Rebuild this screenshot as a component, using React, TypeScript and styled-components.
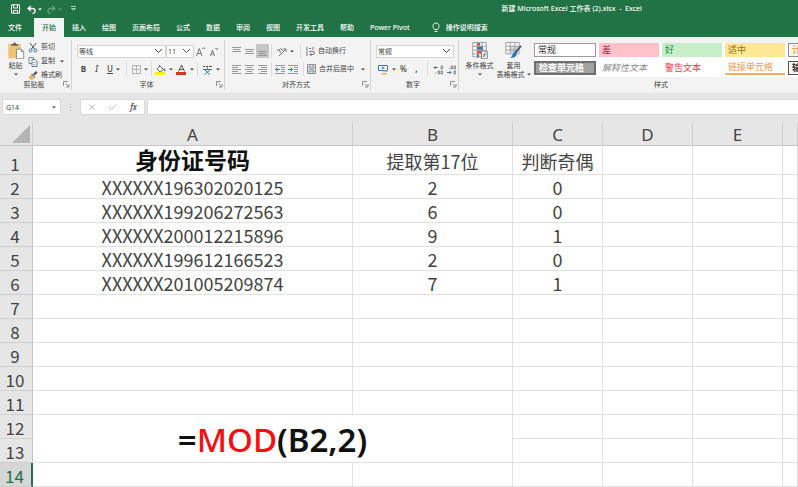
import React from "react";
import styled, { createGlobalStyle, css } from "styled-components";

const GREEN = "#217346";
const INK = "#444444";

const GlobalStyle = createGlobalStyle`
  * { box-sizing: border-box; }
  body { margin: 0; background: #ffffff; color: ${INK}; font-family: "Noto Sans", "Noto Sans CJK SC", sans-serif; font-size: 7px; }
  button, input, select { font: inherit; color: inherit; margin: 0; padding: 0; border: 0; background: none; border-radius: 0; }
  input:focus, select:focus { outline: 0; }
`;

const TopBar = styled.header`
  background: ${GREEN};
  color: #ffffff;
`;

const TitleRow = styled.div`
  display: flex;
  align-items: center;
  justify-content: space-between;
  height: 18px;
  padding: 0 156px 0 8px;
`;

const QuickAccess = styled.div`
  display: flex;
  align-items: center;
  gap: 5px;
`;

const QuickButton = styled.button<{ $dim?: boolean }>`
  display: flex;
  align-items: center;
  gap: 2px;
  height: 14px;
  opacity: ${(p) => (p.$dim ? 0.3 : 1)};
`;

const DocTitle = styled.h1`
  margin: 0;
  font-size: 7px;
  line-height: 16px;
  font-weight: 500;
  white-space: pre;
`;

const TabRow = styled.nav`
  display: flex;
  height: 19px;
  align-items: stretch;
`;

const Tab = styled.button<{ $active?: boolean; $file?: boolean }>`
  padding: 0 8px;
  margin-right: ${(p) => (p.$file ? 4 : 0)}px;
  font-size: 7px;
  line-height: 17px;
  font-weight: 500;
  white-space: nowrap;
  ${(p) => p.$active && css`background: #f3f3f3; color: ${GREEN};`}
`;

const TellMe = styled(Tab)`
  display: flex;
  align-items: center;
  gap: 6px;
  margin-left: 6px;
`;

const RibbonBar = styled.section`
  display: flex;
  height: 56px;
  background: #f3f3f3;
  overflow: hidden;
`;

const Group = styled.div<{ $width?: number }>`
  display: flex;
  flex-direction: column;
  flex: ${(p) => (p.$width ? `0 0 ${p.$width}px` : "1 0 400px")};
  margin: 3px 0;
  padding-left: 5px;
  border-right: 1px solid #d2d2d2;
  &:last-child { border-right: 0; }
`;

const GroupBody = styled.div`
  flex: 1;
  display: flex;
  min-height: 0;
`;

const GroupFooter = styled.div`
  display: flex;
  align-items: center;
  height: 11px;
  line-height: 11px;
  padding-right: 1px;
  span { flex: 1; text-align: center; }
`;

const Launcher = styled.button`
  display: flex;
`;

const Rows = styled.div`
  display: flex;
  flex-direction: column;
  flex: 1;
  padding-top: 2px;
`;

const ToolRow = styled.div`
  display: flex;
  align-items: center;
  height: 18px;
`;

const Tool = styled.button<{ $wide?: boolean; $on?: boolean }>`
  display: flex;
  align-items: center;
  justify-content: center;
  gap: 3px;
  width: ${(p) => (p.$wide ? 21 : 13)}px;
  height: 14px;
  flex: none;
  background: ${(p) => (p.$on ? "#c6c6c6" : "none")};
`;

const TextTool = styled.button`
  display: flex;
  align-items: center;
  gap: 3px;
  height: 14px;
  line-height: 14px;
  white-space: nowrap;
`;

const Divider = styled.span<{ $space?: number }>`
  width: 1px;
  height: 14px;
  margin: 0 ${(p) => p.$space ?? 2}px;
  background: #dcdcdc;
`;

const SelectBox = styled.span<{ $width: number }>`
  display: flex;
  align-items: center;
  width: ${(p) => p.$width}px;
  height: 13px;
  padding-right: 2px;
  background: #ffffff;
  border: 1px solid #d4d4d4;
  select {
    appearance: none;
    flex: 1;
    min-width: 0;
    height: 11px;
    line-height: 11px;
    padding-left: 1px;
  }
  svg { pointer-events: none; }
`;

const BigTool = styled.button<{ $width: number }>`
  display: flex;
  flex-direction: column;
  align-items: center;
  width: ${(p) => p.$width}px;
  padding-top: 1px;
  line-height: 9px;
  white-space: nowrap;
  > svg:first-child { margin-bottom: 2px; }
`;

const CaretLine = styled.span`
  display: flex;
  align-items: center;
  justify-content: center;
  gap: 2px;
  height: 9px;
`;

const Stack = styled.div`
  display: flex;
  flex-direction: column;
  padding-left: 2px;
`;

const Gallery = styled.div`
  flex: 1;
  min-width: 0;
  align-self: flex-start;
  display: grid;
  grid-template-columns: 62px repeat(4, 60px);
  gap: 4px 3px;
  margin: 3px 0 0 2px;
  padding-bottom: 2px;
  background: #ffffff;
  overflow: hidden;
`;

type SwatchKind = "normal" | "bad" | "good" | "neutral" | "calc" | "check" | "explain" | "warn" | "link" | "output";

const swatches: Record<SwatchKind, ReturnType<typeof css>> = {
  normal: css`border: 1px solid #9b9b9b; color: #333333;`,
  bad: css`background: #ffc2cb; color: #b3203a;`,
  good: css`background: #c5eec9; color: #1f8a3d;`,
  neutral: css`background: #ffe894; color: #a06d12;`,
  calc: css`background: #f5f5f5; border: 1px solid #8f8f8f; color: #fa7d00;`,
  check: css`background: #a2a2a2; border: 2px solid #6f6f6f; color: #ffffff; font-weight: 700;`,
  explain: css`color: #8a8a8a; font-style: italic;`,
  warn: css`color: #f33b48;`,
  link: css`color: #f79646; border-bottom: 2px solid #ffab5c;`,
  output: css`background: #f5f5f5; border: 1px solid #555555; color: #333333; font-weight: 700;`,
};

const Swatch = styled.button<{ $kind: SwatchKind }>`
  display: flex;
  align-items: center;
  height: 14px;
  padding: 0 3px;
  font-size: 9px;
  line-height: 10px;
  white-space: nowrap;
  overflow: hidden;
  ${(p) => swatches[p.$kind]}
`;

const FormulaBar = styled.section`
  display: flex;
  align-items: stretch;
  height: 29px;
  padding: 6px 0 7px 2px;
  background: #e6e6e6;
`;

const NameBox = styled.label`
  display: flex;
  align-items: center;
  width: 59px;
  padding: 0 4px 0 3px;
  background: #ffffff;
  border: 1px solid #dadada;
  input { flex: 1; min-width: 0; height: 14px; font-size: 7px; }
`;

const Grip = styled.span`
  width: 19px;
  display: flex;
  align-items: center;
  justify-content: center;
`;

const FormulaButtons = styled.div`
  display: flex;
  align-items: center;
  justify-content: space-around;
  width: 65px;
  margin-right: 2px;
  background: #ffffff;
  border: 1px solid #dadada;
`;

const FormulaInput = styled.input`
  flex: 1;
  min-width: 0;
  && { background: #ffffff; border: 1px solid #dadada; border-right: 0; padding: 0 4px; }
`;

const Sheet = styled.table`
  width: 100%;
  table-layout: fixed;
  border-collapse: separate;
  border-spacing: 0;
  font-family: "Noto Sans CJK SC", "Noto Sans", sans-serif;
  font-size: 18px;
  line-height: 21px;
  color: #444444;
`;

const ColHead = styled.th`
  height: 24px;
  padding: 2px 0 0;
  background: #e6e6e6;
  border-right: 1px solid #cfcfcf;
  border-bottom: 1px solid #c6c6c6;
  font-family: "Noto Sans", sans-serif;
  font-size: 17px;
  line-height: 21px;
  font-weight: 400;
`;

const Corner = styled(ColHead)`
  padding: 0 2px 2px 0;
  text-align: right;
  vertical-align: bottom;
  line-height: 0;
`;

const RowHead = styled.th<{ $active?: boolean; $tall?: boolean }>`
  height: ${(p) => (p.$tall ? 29 : 24)}px;
  padding: 0 2px 0 0;
  vertical-align: bottom;
  background: ${(p) => (p.$active ? "#d6d6d6" : "#e6e6e6")};
  color: ${(p) => (p.$active ? GREEN : "#444444")};
  border-right: ${(p) => (p.$active ? `2px solid ${GREEN}` : "1px solid #c6c6c6")};
  border-bottom: 1px solid #cfcfcf;
  font-size: 17px;
  line-height: 20px;
  font-weight: 400;
`;

const Cell = styled.td<{ $title?: boolean }>`
  padding: 2px 0 0;
  text-align: center;
  border-right: 1px solid #e2e2e2;
  border-bottom: 1px solid #e2e2e2;
  white-space: nowrap;
  ${(p) => p.$title && css`
    padding: 3px 0 0;
    font-family: "Liberation Sans", "Noto Sans CJK SC", sans-serif;
    font-size: 23px;
    line-height: 25px;
    font-weight: 700;
    color: #111111;
  `}
`;

const FormulaCell = styled(Cell)`
  font-family: "Noto Sans", sans-serif;
  font-size: 33px;
  line-height: 45px;
  font-weight: 600;
  color: #111111;
`;

const FunctionName = styled.span`
  font-weight: 500;
  color: #fb0d0d;
`;

const Caret = () => (
  <svg width="4" height="3" viewBox="0 0 4 3" aria-hidden><path d="M0 .5h4L2 2.5z" fill="currentColor" /></svg>
);

const Chevron = () => (
  <svg width="9" height="6" viewBox="0 0 9 6" aria-hidden><path d="M1 1l3.5 3.5L8 1" fill="none" stroke="#555" strokeWidth="1" /></svg>
);

type IconProps = { w?: number; h?: number; children: React.ReactNode };
const Icon = ({ w = 11, h = 11, children }: IconProps) => (
  <svg width={w} height={h} viewBox={`0 0 ${w} ${h}`} fill="none" stroke="#777" strokeWidth="1" aria-hidden>{children}</svg>
);

const Lines = ({ rows }: { rows: [number, number, number][] }) => (
  <Icon>{rows.map(([x, y, len]) => <path key={y} d={`M${x} ${y}.5h${len}`} stroke="#999" />)}</Icon>
);

const LaunchIcon = () => (
  <Icon w={7} h={7}><path d="M.5 5V.5H5M2.5 2.5l3 3M6 3v3H3" stroke="#777" strokeWidth=".8" /></Icon>
);

const Footer = ({ label, launcher = true }: { label: string; launcher?: boolean }) => (
  <GroupFooter>
    <span>{label}</span>
    {launcher && <Launcher aria-label={`${label}设置`}><LaunchIcon /></Launcher>}
  </GroupFooter>
);

const Letter = styled.span<{ $bold?: boolean; $italic?: boolean; $under?: boolean }>`
  font-size: 8px;
  line-height: 12px;
  font-weight: ${(p) => (p.$bold ? 700 : 500)};
  font-style: ${(p) => (p.$italic ? "italic" : "normal")};
  text-decoration: ${(p) => (p.$under ? "underline" : "none")};
`;

const ClipboardGroup = () => (
  <Group $width={72}>
    <GroupBody>
      <BigTool $width={21}>
        <Icon w={18} h={19}>
          <path d="M1 3h13v15H1z" fill="#efc477" stroke="none" />
          <path d="M4 5V3h2c0-2 3-2 3 0h2v2z" fill="#666" stroke="none" />
          <path d="M9.500 8.500h5l2.500 2.500v7.500h-7.500z" fill="#fff" stroke="#8a8a8a" />
          <path d="M14.500 8.500V11H17" stroke="#8a8a8a" />
        </Icon>
        <span>粘贴</span>
        <CaretLine><Caret /></CaretLine>
      </BigTool>
      <Stack>
        <TextTool>
          <Icon w={10}><path d="M2 1l4.500 6M8 1L3.500 7" stroke="#555" /><circle cx="2.500" cy="8.500" r="1.500" stroke="#3f76b5" /><circle cx="7.500" cy="8.500" r="1.500" stroke="#3f76b5" /></Icon>
          剪切
        </TextTool>
        <TextTool>
          <Icon w={10}><path d="M1 1.500h4.500v6H1z" fill="#fff" stroke="#7b8794" /><path d="M4 3.500h3l2 2v5H4z" fill="#fff" stroke="#5b7ea6" /><path d="M5.500 6.500h2M5.500 8.500h2" stroke="#5b8fc7" strokeWidth=".7" /></Icon>
          复制&nbsp;<Caret />
        </TextTool>
        <TextTool>
          <Icon w={10}><path d="M5 4l3-3 1.500 1.500L7 5.500z" fill="#555" stroke="none" /><path d="M4 3.500l3.500 3.500-1 1L3 4.500z" fill="#777" stroke="none" /><path d="M3 5l3 3-2 2.500L0 7z" fill="#edb35b" stroke="none" /></Icon>
          格式刷
        </TextTool>
      </Stack>
    </GroupBody>
    <Footer label="剪贴板" />
  </Group>
);

const FontGroup = () => (
  <Group $width={153}>
    <GroupBody>
      <Rows>
        <ToolRow>
          <SelectBox $width={89}><select aria-label="字体"><option>等线</option></select><Chevron /></SelectBox>
          <SelectBox $width={28}><select aria-label="字号"><option>11</option></select><Chevron /></SelectBox>
          <Tool aria-label="增大字号"><Icon><path d="M1.500 10l2.800-7.500L7 10M2.500 7.500h3.500M7.500 3l1.200-1.500L10 3" /></Icon></Tool>
          <Tool aria-label="减小字号"><Icon><path d="M2.500 10l2-6 2 6M3 8h3M7.500 2l1.200 1.500L10 2" /></Icon></Tool>
        </ToolRow>
        <ToolRow>
          <Tool><Letter $bold>B</Letter></Tool>
          <Tool><Letter $italic>I</Letter></Tool>
          <Tool $wide><Letter $under>U</Letter><Caret /></Tool>
          <Divider />
          <Tool $wide aria-label="边框"><Icon w={9} h={9}><path d="M.5.5h8v8h-8zM4.500.5v8M.5 4.500h8" stroke="#b5b5b5" /></Icon><Caret /></Tool>
          <Divider $space={1} />
          <Tool $wide aria-label="填充颜色"><Icon><path d="M4.500 1v2M2 5l3-3 3.500 3.500L5 8z" fill="#fff" stroke="#666" /><path d="M9 4.500l1 2.500" stroke="#3f76b5" strokeWidth="1.500" /><path d="M0 9.500h10" stroke="#fff100" strokeWidth="3" /></Icon><Caret /></Tool>
          <Tool $wide aria-label="字体颜色"><Icon><path d="M2.500 7.500L5.500 1l3 6.500M3.500 5.500h4" stroke="#555" /><path d="M0 9.500h10" stroke="#e0311f" strokeWidth="3" /></Icon><Caret /></Tool>
          <Divider />
          <Tool $wide aria-label="拼音"><Icon><path d="M1 2.500h2M4 2.500h2M7 2.500h3" stroke="#555" /><path d="M1 5.500h9M5.500 3.500v2M3 6l5 4.500M8 6l-5.500 4.500" stroke="#3f76b5" /></Icon><Caret /></Tool>
        </ToolRow>
      </Rows>
    </GroupBody>
    <Footer label="字体" />
  </Group>
);

const Indent = ({ flip }: { flip?: boolean }) => (
  <Icon><path d="M0 1.500h10M6 3.500h4M6 5.500h4M6 7.500h4M0 9.500h10" stroke="#999" /><path d={flip ? "M0 5.500h4M2.500 3.500l2 2-2 2" : "M1 5.500h4M2.500 3.500l-2 2 2 2"} stroke="#3278bd" /></Icon>
);

const AlignGroup = () => (
  <Group $width={146}>
    <GroupBody>
      <Rows>
        <ToolRow>
          <Tool aria-label="顶端对齐"><Lines rows={[[1, 1, 9], [2, 3, 7], [1, 5, 9]]} /></Tool>
          <Tool aria-label="垂直居中"><Lines rows={[[1, 3, 9], [2, 5, 7], [1, 7, 9]]} /></Tool>
          <Tool $on aria-label="底端对齐"><Lines rows={[[1, 5, 9], [2, 7, 7], [1, 9, 9]]} /></Tool>
          <Divider />
          <Tool $wide aria-label="方向"><Icon><path d="M3 10L10 3M7 3h3v3M1 5l2-2 1.500 4M4.500 2l2 3" /></Icon><Caret /></Tool>
          <Divider $space={5} />
          <TextTool><Icon w={9}><path d="M1 1v9M3 2.500h2M3 5.500h4c2 0 2 3 0 3H4M5.500 7L4 8.500 5.500 10M7 1v3" /></Icon>自动换行</TextTool>
        </ToolRow>
        <ToolRow>
          <Tool aria-label="左对齐"><Lines rows={[[1, 1, 9], [1, 3, 6], [1, 5, 9], [1, 7, 6], [1, 9, 9]]} /></Tool>
          <Tool aria-label="居中"><Lines rows={[[1, 1, 9], [3, 3, 5], [1, 5, 9], [3, 7, 5], [1, 9, 9]]} /></Tool>
          <Tool aria-label="右对齐"><Lines rows={[[1, 1, 9], [4, 3, 6], [1, 5, 9], [4, 7, 6], [1, 9, 9]]} /></Tool>
          <Divider />
          <Tool aria-label="减少缩进量"><Indent /></Tool>
          <Tool aria-label="增加缩进量"><Indent flip /></Tool>
          <Divider $space={3} />
          <TextTool><Icon w={9}><path d="M.5.5h8v9h-8zM.5 3h8M.5 7h8M3 .5V3M6 .5V3M3 7v3M6 7v3" strokeWidth=".8" /><path d="M2 5h5" stroke="#3f76b5" /></Icon>合并后居中&nbsp;&nbsp;<Caret /></TextTool>
        </ToolRow>
      </Rows>
    </GroupBody>
    <Footer label="对齐方式" />
  </Group>
);

const NumberGroup = () => (
  <Group $width={88}>
    <GroupBody>
      <Rows>
        <ToolRow>
          <SelectBox $width={78}><select aria-label="数字格式"><option>常规</option></select><Chevron /></SelectBox>
        </ToolRow>
        <ToolRow>
          <Tool $wide aria-label="会计数字格式"><Icon><path d="M.5 1.500h9v5h-9z" fill="#fff" stroke="#3278bd" /><circle cx="5" cy="4" r="1" stroke="#3278bd" /><path d="M5 6.500h5v1.500H5zM4 9h5v1.500H4z" fill="#edb84a" stroke="none" /></Icon><Caret /></Tool>
          <Tool><Letter>%</Letter></Tool>
          <Tool><Letter $bold>,</Letter></Tool>
          <Divider $space={4} />
          <Tool aria-label="增加小数位数"><Icon><path d="M1 3.500h4M2.500 2L1 3.500 2.500 5" stroke="#3f76b5" /><path d="M2.500 8.500v1M5 7h1.500v3H5zM8 7h1.500v3H8zM8 2h1.500v3H8z" strokeWidth=".8" /></Icon></Tool>
          <Tool aria-label="减少小数位数"><Icon><path d="M1 8.500h4M3.500 7L5 8.500 3.500 10" stroke="#3f76b5" /><path d="M3.500 4v1M5 2h1.500v3H5zM8 2h1.500v3H8zM8 7h1.500v3H8z" strokeWidth=".8" /></Icon></Tool>
        </ToolRow>
      </Rows>
    </GroupBody>
    <Footer label="数字" />
  </Group>
);

const gallery: [SwatchKind, string][] = [
  ["normal", "常规"], ["bad", "差"], ["good", "好"], ["neutral", "适中"], ["calc", "计算"],
  ["check", "检查单元格"], ["explain", "解释性文本"], ["warn", "警告文本"], ["link", "链接单元格"], ["output", "输出"],
];

const StyleGroup = () => (
  <Group>
    <GroupBody>
      <BigTool $width={31}>
        <Icon w={18} h={19}>
          <path d="M1.500 1.500h14v15h-14zM1.500 5.500h14M1.500 9.500h14M1.500 13.500h14M6 1.500v15M11 1.500v15" fill="#fff" stroke="#9a9a9a" />
          <path d="M6 2h3v3H6zM6 10h4v3H6z" fill="#e0474c" stroke="none" />
          <path d="M6 6h6v3H6zM6 14h2v3H6z" fill="#43719f" stroke="none" />
          <path d="M10.500 10.500h6v8h-6z" fill="#fff" stroke="#777" />
          <path d="M12 13.500h3M12 15.500h3M15 12l-3 5" stroke="#555" strokeWidth=".7" />
        </Icon>
        <span>条件格式</span>
        <CaretLine><Caret /></CaretLine>
      </BigTool>
      <BigTool $width={37}>
        <Icon w={19} h={19}>
          <path d="M1.500 1.500h14v12h-14z" fill="#fff" stroke="#999" />
          <path d="M6 5.500h10v8H6z" fill="#c6d7e9" stroke="none" />
          <path d="M1.500 5.500h14M1.500 9.500h14M6 1.500v12M11 1.500v12" stroke="#999" />
          <path d="M17.500 5L11 13" stroke="#555" strokeWidth="2" />
          <path d="M11 11l2 2c0 4-4 5-7 5 2-1 2-5 5-7z" fill="#2e75b6" stroke="none" />
        </Icon>
        <span>套用</span>
        <CaretLine>表格格式<Caret /></CaretLine>
      </BigTool>
      <Gallery>
        {gallery.map(([kind, label]) => <Swatch key={kind} $kind={kind}>{label}</Swatch>)}
      </Gallery>
    </GroupBody>
    <Footer label="样式" launcher={false} />
  </Group>
);

const tabs = ["文件", "开始", "插入", "绘图", "页面布局", "公式", "数据", "审阅", "视图", "开发工具", "帮助", "Power Pivot"];
const columns = ["A", "B", "C", "D", "E"];
const records: string[][] = [
  ["身份证号码", "提取第17位", "判断奇偶"],
  ["XXXXXX196302020125", "2", "0"],
  ["XXXXXX199206272563", "6", "0"],
  ["XXXXXX200012215896", "9", "1"],
  ["XXXXXX199612166523", "2", "0"],
  ["XXXXXX201005209874", "7", "1"],
];
const rowNumbers = Array.from({ length: 14 }, (_, i) => i + 1);

const SheetRow = ({ n }: { n: number }) => {
  const record = records[n - 1] ?? [];
  const merged = n === 12 || n === 13;
  return (
    <tr>
      <RowHead scope="row" $tall={n === 1} $active={n === 14}>{n}</RowHead>
      {n === 12 && <FormulaCell colSpan={2} rowSpan={2}>=<FunctionName>MOD</FunctionName>(B2,2)</FormulaCell>}
      {[0, 1, 2, 3, 4, 5].slice(merged ? 2 : 0).map((c) => (
        <Cell key={c} $title={n === 1 && c === 0}>{record[c]}</Cell>
      ))}
    </tr>
  );
};

export default function App() {
  return (
    <>
      <GlobalStyle />
      <TopBar>
        <TitleRow>
          <QuickAccess>
            <QuickButton aria-label="保存"><Icon w={14} h={10}><path d="M3.500.8h8v8.400h-8zM5.500 1v3h4V1M5.500 9V6.500h4V9" stroke="#fff" /></Icon></QuickButton>
            <QuickButton aria-label="撤消"><Icon w={9} h={9}><path d="M4 1L1 3.500 4 6M1 3.500h4.500c3.500 0 3.500 5 0 5" stroke="#fff" strokeWidth="1.300" /></Icon><Caret /></QuickButton>
            <QuickButton $dim aria-label="恢复"><Icon w={9} h={9}><path d="M5 1l3 2.500L5 6M8 3.500H3.500C0 3.500 0 8.500 3.500 8.500" stroke="#fff" strokeWidth="1.300" /></Icon><Caret /></QuickButton>
            <QuickButton aria-label="自定义快速访问工具栏"><Icon w={10} h={6}><path d="M4 .5h5M4.500 2.500h4l-2 2z" stroke="#cfe3d7" strokeWidth=".8" /></Icon></QuickButton>
          </QuickAccess>
          <DocTitle>{"新建 Microsoft Excel 工作表 (2).xlsx  -  Excel"}</DocTitle>
        </TitleRow>
        <TabRow>
          {tabs.map((t) => <Tab key={t} $active={t === "开始"} $file={t === "文件"}>{t}</Tab>)}
          <TellMe>
            <Icon w={8} h={11}><path d="M2.500 7.500C0 5 .5 1 4 1s4 4 1.500 6.500zM2.500 9.500h3" stroke="#fff" strokeWidth=".9" /></Icon>
            操作说明搜索
          </TellMe>
        </TabRow>
      </TopBar>
      <RibbonBar>
        <ClipboardGroup />
        <FontGroup />
        <AlignGroup />
        <NumberGroup />
        <StyleGroup />
      </RibbonBar>
      <FormulaBar>
        <NameBox><input aria-label="名称框" defaultValue="G14" /><Caret /></NameBox>
        <Grip><Icon w={3} h={9}><path d="M1.500 1v1M1.500 4v1M1.500 7v1" stroke="#aaa" /></Icon></Grip>
        <FormulaButtons>
          <Tool aria-label="取消"><Icon w={8} h={8}><path d="M1.500 1.500l5 5M6.500 1.500l-5 5" stroke="#bbb" /></Icon></Tool>
          <Tool aria-label="输入"><Icon w={9} h={8}><path d="M1 4l2.500 2.500L8 1.500" stroke="#bbb" /></Icon></Tool>
          <Tool aria-label="插入函数"><Letter $italic>fx</Letter></Tool>
        </FormulaButtons>
        <FormulaInput aria-label="编辑栏" />
      </FormulaBar>
      <Sheet>
        <colgroup>
          <col width="33" /><col width="320" /><col width="160" /><col width="90" /><col width="90" /><col width="90" /><col />
        </colgroup>
        <thead>
          <tr>
            <Corner aria-label="全选"><Icon w={18} h={18}><path d="M18 0v18H0z" fill="#b4b4b4" stroke="none" /></Icon></Corner>
            {columns.map((c) => <ColHead key={c} scope="col">{c}</ColHead>)}
            <ColHead />
          </tr>
        </thead>
        <tbody>{rowNumbers.map((n) => <SheetRow key={n} n={n} />)}</tbody>
      </Sheet>
    </>
  );
}
